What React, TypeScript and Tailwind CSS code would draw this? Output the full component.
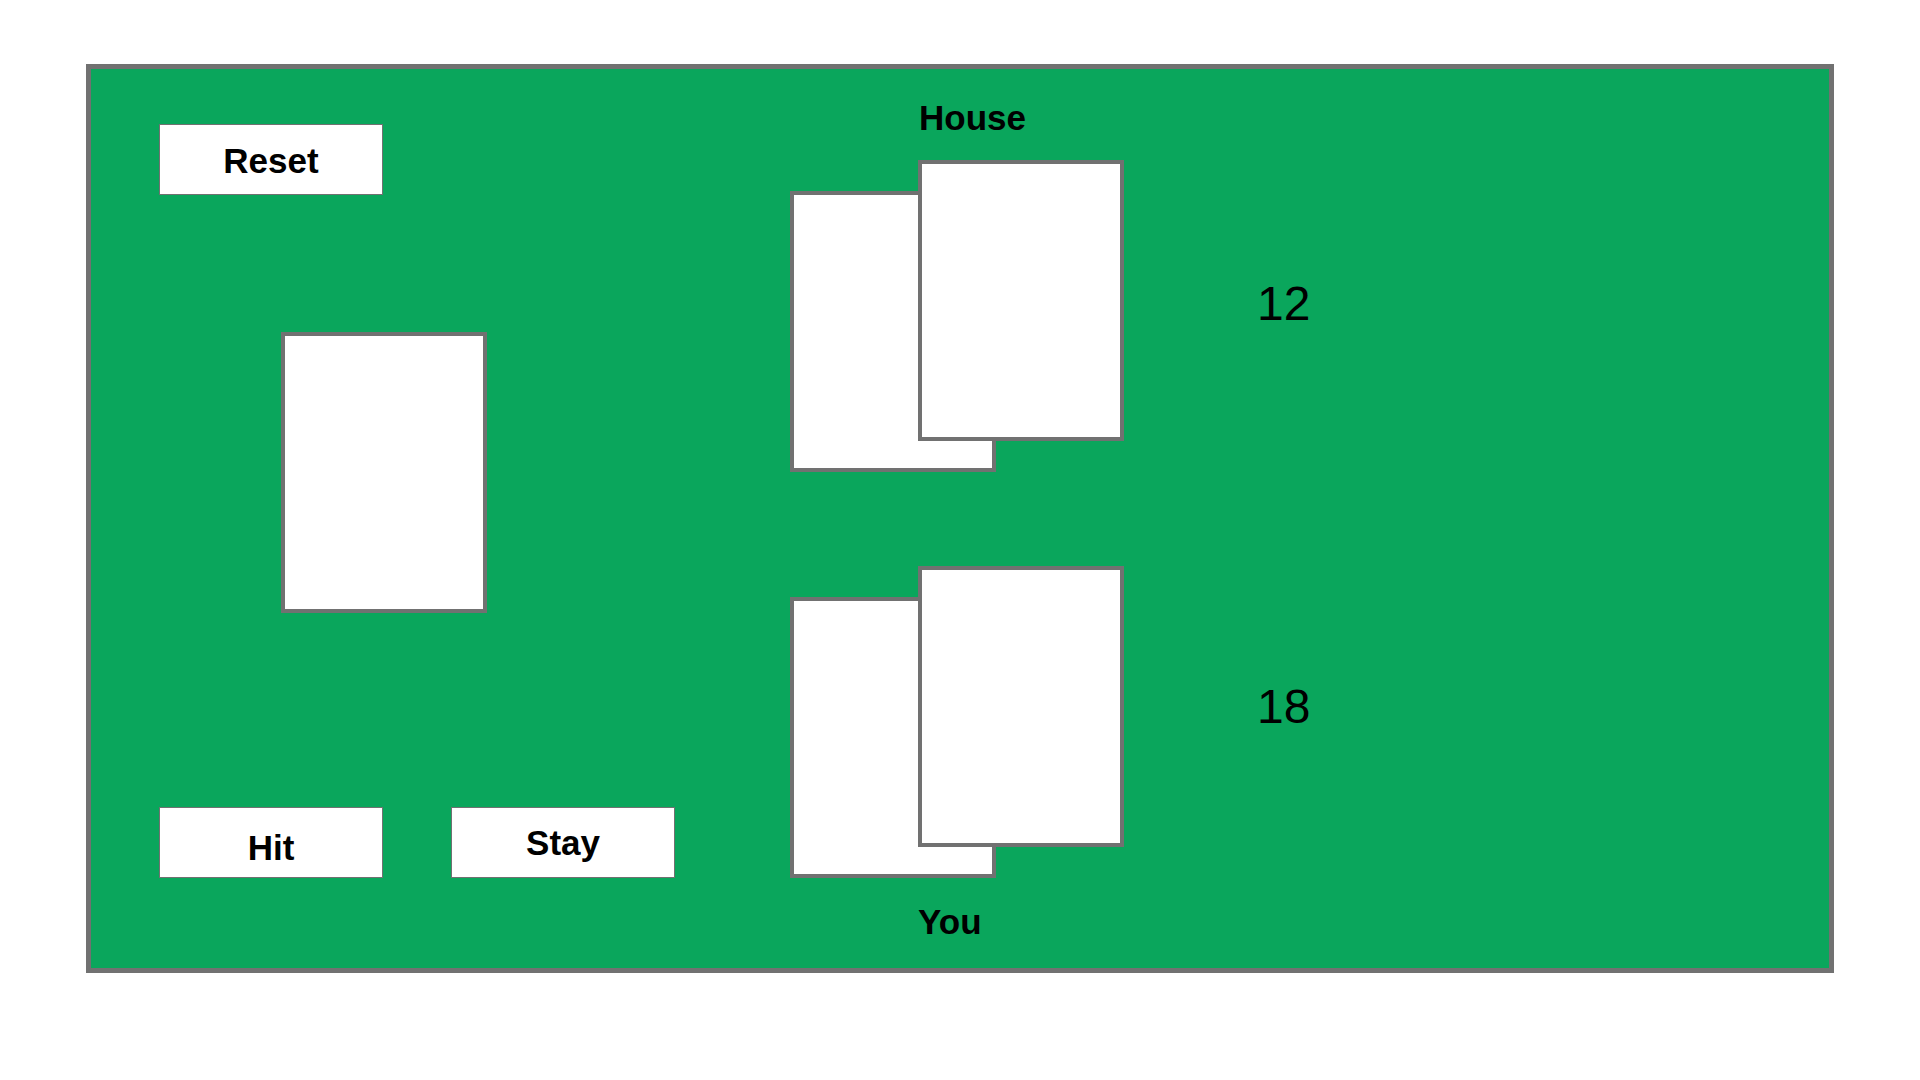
const font = "font-['Liberation_Sans',Arial,Helvetica,sans-serif]";

function Card({ className = "" }: { className?: string }) {
  return <div className={`w-[206px] h-[281px] bg-white border-4 border-[#717171] ${className}`} />;
}

function Stack() {
  return (
    <div className="relative flex items-start w-[334px] h-[312px]">
      <Card className="mt-[31px]" />
      {/* top card lies over the one below */}
      <Card className="absolute left-[128px] top-0" />
    </div>
  );
}

function TableButton({ label, className = "" }: { label: string; className?: string }) {
  return (
    <button
      className={`w-[224px] h-[71px] flex items-center justify-center bg-white border border-[#717171] text-[35px] leading-[40px] font-bold text-black ${className}`}
    >
      {label}
    </button>
  );
}

export default function App() {
  return (
    <div className={`min-h-screen w-full bg-white overflow-hidden ${font}`}>
      <div className="mt-[64px] ml-[86px] w-[1748px] h-[909px] border-[5px] border-[#717171] bg-[#0aa65c] flex">
        {/* Controls and deck */}
        <div className="pl-[68px] pt-[55px] flex flex-col">
          <TableButton label="Reset" className="pt-[2px]" />
          <Card className="ml-[122px] mt-[137px]" />
          <div className="mt-[194px] flex gap-[68px]">
            <TableButton label="Hit" className="pt-[10px]" />
            <TableButton label="Stay" />
          </div>
        </div>

        {/* Hands */}
        <div className="ml-[115px] pt-[29px] flex flex-col">
          <div className="ml-[129px] text-[35px] leading-[40px] font-bold text-black">House</div>
          <div className="mt-[22px]">
            <Stack />
          </div>
          <div className="mt-[94px]">
            <Stack />
          </div>
          <div className="ml-[128px] mt-[24px] text-[35px] leading-[40px] font-bold text-black">You</div>
        </div>

        {/* Totals */}
        <div className="ml-[133px] pt-[211px] flex flex-col text-[48px] leading-[48px] text-black">
          <div>12</div>
          <div className="mt-[355px]">18</div>
        </div>
      </div>
    </div>
  );
}
